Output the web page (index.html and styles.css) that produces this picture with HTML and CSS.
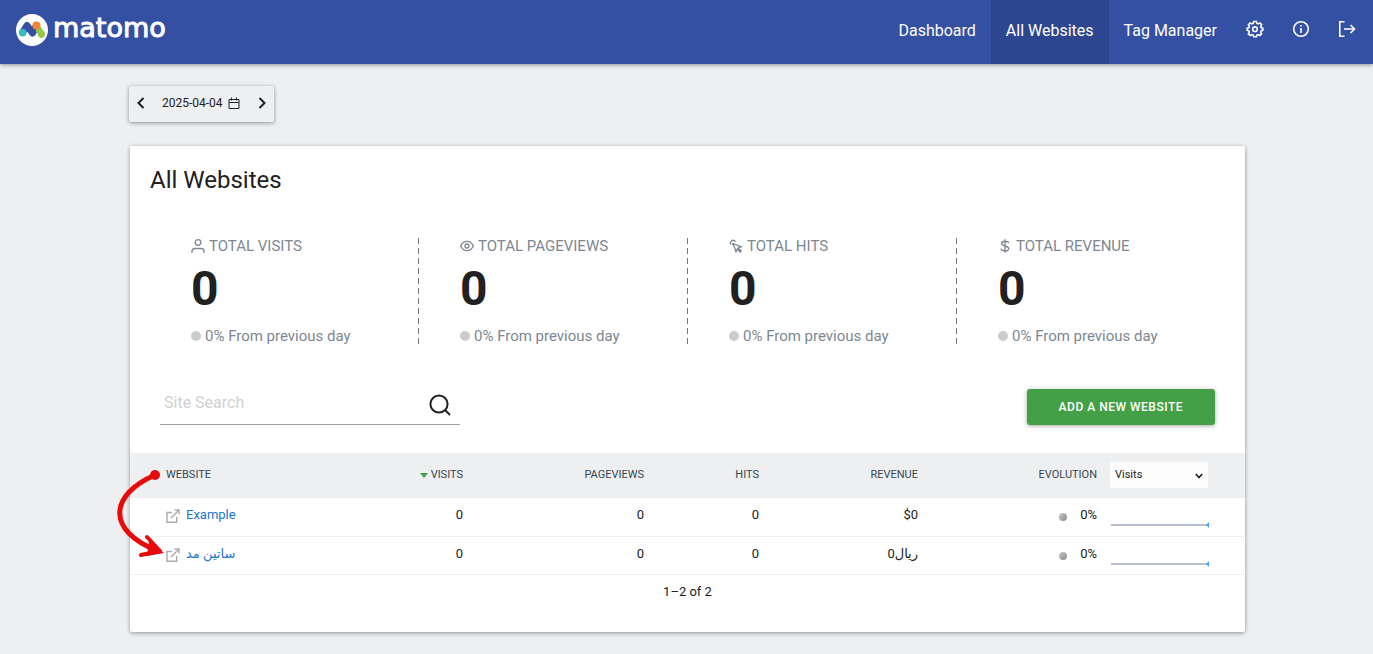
FILE: index.html
```html
<!DOCTYPE html>
<html lang="en">
<head>
<meta charset="utf-8">
<title>All Websites - Matomo</title>
<meta name="viewport" content="width=device-width, initial-scale=1">
<link rel="stylesheet" href="styles.css">
</head>
<body>
<header class="topbar">
  <a class="brand" href="#" aria-label="matomo">
    <svg class="brand-mark" viewBox="0 0 32 32" aria-hidden="true">
      <circle cx="16" cy="16" r="16" fill="#fff"/>
      <path d="M6.600 18.500L11 11.500L16.500 19L20.600 11.500" fill="none" stroke="#3450a3" stroke-width="7" stroke-linecap="round" stroke-linejoin="round"/>
      <path d="M23.700 11.500L28 17.500A3.700 3.700 0 1 1 21.800 20.500L19.500 16.500Z" fill="#95c748"/>
      <circle cx="20.400" cy="11.500" r="4" fill="#f38334"/>
      <circle cx="6.700" cy="18.700" r="3.700" fill="#35bfc0"/>
    </svg>
    <span class="brand-name">matomo</span>
  </a>
  <nav class="nav">
    <a class="nav-link" href="#">Dashboard</a>
    <a class="nav-link nav-link-active" href="#">All Websites</a>
    <a class="nav-link" href="#">Tag Manager</a>
    <a class="nav-icon" href="#" aria-label="Administration">
      <svg class="icon-nav" viewBox="0 0 18 18" aria-hidden="true"><path d="M7.600 1.500h2.800l.5 1.900 1.300.5 1.700-1 1.800 1.800-1 1.700.5 1.300 1.600.4v2.200l-1.700.5-.5 1.300 1 1.700-1.800 1.800-1.700-1-1.200.5-.5 1.700H7.700l-.5-1.700-1.300-.5-1.700 1-1.800-1.800 1-1.700-.5-1.300-1.700-.5V8.100l1.700-.4.5-1.300-1-1.700L4.200 2.900l1.700 1 1.300-.5z"/><circle cx="9" cy="9.200" r="2.300"/></svg>
    </a>
    <a class="nav-icon" href="#" aria-label="Help">
      <svg class="icon-nav" viewBox="0 0 18 18" aria-hidden="true"><circle cx="9" cy="9" r="7.300"/><path d="M9 8v5M9 5v1.500"/></svg>
    </a>
    <a class="nav-icon" href="#" aria-label="Sign out">
      <svg class="icon-nav" viewBox="0 0 18 18" aria-hidden="true"><path d="M6.500 1.700h-4.700v14.600h4.700M6 9h10.500M12.500 5l4 4-4 4"/></svg>
    </a>
  </nav>
</header>

<main class="page">
  <div class="period">
    <button class="period-step" type="button" aria-label="Previous day"><svg class="icon-step" viewBox="0 0 8 12" aria-hidden="true"><path d="M6.500 1L1.500 6l5 5"/></svg></button>
    <button class="period-date" type="button">2025-04-04
      <svg class="icon-calendar" viewBox="0 0 12 12" aria-hidden="true"><path d="M1 2.500h10v9H1zM1 5.500h10M3.500.5v3M8.500.5v3"/></svg>
    </button>
    <button class="period-step" type="button" aria-label="Next day"><svg class="icon-step" viewBox="0 0 8 12" aria-hidden="true"><path d="M1.500 1l5 5-5 5"/></svg></button>
  </div>

  <section class="card">
    <h1 class="card-title">All Websites</h1>

    <div class="kpis">
      <div class="kpi">
        <div class="kpi-label"><svg class="icon-kpi" viewBox="0 0 14 14" aria-hidden="true"><circle cx="7" cy="3.500" r="2.800"/><path d="M1 14v-1.500a3 3 0 0 1 3-3h6a3 3 0 0 1 3 3V14"/></svg>TOTAL VISITS</div>
        <div class="kpi-value">0</div>
        <div class="kpi-change"><span class="dot"></span>0% From previous day</div>
      </div>
      <div class="kpi">
        <div class="kpi-label"><svg class="icon-kpi" viewBox="0 0 14 14" aria-hidden="true"><path d="M.6 7C3.500.800 10.500.800 13.400 7 10.500 13.200 3.500 13.200.6 7z"/><circle cx="7" cy="7" r="2"/></svg>TOTAL PAGEVIEWS</div>
        <div class="kpi-value">0</div>
        <div class="kpi-change"><span class="dot"></span>0% From previous day</div>
      </div>
      <div class="kpi">
        <div class="kpi-label"><svg class="icon-kpi" viewBox="0 0 14 14" aria-hidden="true"><path d="M4 4.500l8.300 3.300-3 1.200 3 3-1.200 1-2.800-3-1.300 2.800zM1.800 5.500A2.600 2.600 0 1 1 6.500 2.700M3.300 4.500L4 6"/></svg>TOTAL HITS</div>
        <div class="kpi-value">0</div>
        <div class="kpi-change"><span class="dot"></span>0% From previous day</div>
      </div>
      <div class="kpi">
        <div class="kpi-label"><svg class="icon-kpi" viewBox="0 0 14 14" aria-hidden="true"><path d="M7 .3v13.400M10.700 4.200C10.200 1.600 3.500 1.500 3.500 4.500S10.800 6.500 10.800 9.600 3.500 12.600 3 9.600"/></svg>TOTAL REVENUE</div>
        <div class="kpi-value">0</div>
        <div class="kpi-change"><span class="dot"></span>0% From previous day</div>
      </div>
    </div>

    <div class="toolbar">
      <form class="search">
        <input class="search-input" type="text" placeholder="Site Search" aria-label="Site Search">
        <button class="search-button" type="button" aria-label="Search"><svg class="icon-search" viewBox="0 0 22 22" aria-hidden="true"><circle cx="10" cy="10" r="8.600"/><path d="M16 16l5 5"/></svg></button>
      </form>
      <button class="add-button" type="button">ADD A NEW WEBSITE</button>
    </div>

    <div class="table-wrap">
      <table class="sites">
        <colgroup>
          <col class="col-site"><col class="col-visits"><col class="col-pageviews"><col class="col-hits"><col class="col-revenue"><col class="col-evolution"><col class="col-graph">
        </colgroup>
        <thead>
          <tr>
            <th class="site-cell" scope="col">WEBSITE</th>
            <th scope="col"><span class="sort-arrow"></span>VISITS</th>
            <th scope="col">PAGEVIEWS</th>
            <th scope="col">HITS</th>
            <th scope="col">REVENUE</th>
            <th scope="col">EVOLUTION</th>
            <th class="graph-cell" scope="col">
              <div class="metric">
                <select class="metric-select" aria-label="Evolution metric"><option>Visits</option><option>Pageviews</option><option>Revenue</option></select>
                <svg class="icon-chevron" viewBox="0 0 8 6" aria-hidden="true"><path d="M.8 1L4 4.500 7.200 1"/></svg>
              </div>
            </th>
          </tr>
        </thead>
        <tbody>
          <tr>
            <td class="site-cell"><div class="site"><a class="site-out" href="#" aria-label="Open Example"><svg class="icon-out" viewBox="0 0 14 14" aria-hidden="true"><path d="M6 3.500H1v9.700h9.700V8M8.500 1H13v4.500M13 1L5 9"/></svg></a><a class="site-link" href="#">Example</a></div></td>
            <td>0</td><td>0</td><td>0</td><td>$0</td>
            <td><span class="trend"></span>0%</td>
            <td class="graph-cell"><svg class="spark" viewBox="0 0 98 6" aria-hidden="true"><path d="M0 3h96" stroke="#b5bfd0" stroke-width="2"/><path d="M98 0v6l-3-3z" fill="#4aa8f5"/></svg></td>
          </tr>
          <tr>
            <td class="site-cell"><div class="site"><a class="site-out" href="#" aria-label="Open ساتین مد"><svg class="icon-out" viewBox="0 0 14 14" aria-hidden="true"><path d="M6 3.500H1v9.700h9.700V8M8.500 1H13v4.500M13 1L5 9"/></svg></a><a class="site-link" href="#">ساتین مد</a></div></td>
            <td>0</td><td>0</td><td>0</td><td>ریال0</td>
            <td><span class="trend"></span>0%</td>
            <td class="graph-cell"><svg class="spark" viewBox="0 0 98 6" aria-hidden="true"><path d="M0 3h96" stroke="#b5bfd0" stroke-width="2"/><path d="M98 0v6l-3-3z" fill="#4aa8f5"/></svg></td>
          </tr>
        </tbody>
      </table>
      <svg class="callout" viewBox="0 0 50 94" aria-hidden="true">
        <circle cx="41" cy="8" r="5" fill="#e80b0b"/>
        <path d="M41 8C-5 28-8 64 44 84" fill="none" stroke="#e80b0b" stroke-width="5"/>
        <path d="M33 70L46 84L27 88" fill="none" stroke="#e80b0b" stroke-width="4" stroke-linecap="round" stroke-linejoin="round"/>
        <path d="M35 74L50 86L33 89Z" fill="#e80b0b"/>
      </svg>
    </div>
    <div class="pager">1–2 of 2</div>
  </section>
</main>
</body>
</html>
```
FILE: styles.css
```css
* { box-sizing: border-box; }

body {
  margin: 0;
  background: #eeeff1;
  color: #212121;
  font-family: Roboto, "DejaVu Sans", sans-serif;
  font-size: 13px;
}

a { text-decoration: none; }
button, input, select { font-family: inherit; color: inherit; }
button { border: 0; background: none; padding: 0; cursor: pointer; }
svg { display: block; flex: none; }

.topbar {
  display: flex;
  justify-content: space-between;
  height: 64px;
  padding: 0 3px 0 16px;
  background: #3450a3;
  box-shadow: 0 1px 4px rgba(0, 0, 0, .4);
}
.brand { display: flex; align-items: center; gap: 5px; height: 60px; color: #fff; }
.brand-mark { width: 32px; height: 32px; }
.brand-name {
  padding-bottom: 4px;
  font-family: "DejaVu Sans", sans-serif;
  font-size: 27px;
  line-height: 32px;
  -webkit-text-stroke: 1px #fff;
}
.nav { display: flex; }
.nav-link { padding: 0 15px; color: #fff; font-size: 16px; line-height: 61px; }
.nav-link-active { background: #2d4690; }
.nav-icon { display: flex; align-items: center; padding: 0 14px; height: 58px; }
.icon-nav { width: 18px; height: 18px; fill: none; stroke: #fff; stroke-width: 1.6; }

.page { padding: 22px 128px 22px 129px; }

.period {
  display: inline-flex;
  align-items: center;
  height: 36px;
  padding-bottom: 2px;
  border-radius: 2px;
  background: #eeeff1;
  box-shadow: 0 1px 4px rgba(0, 0, 0, .4);
  vertical-align: top;
}
.period-step { display: flex; align-items: center; justify-content: center; width: 24px; height: 32px; }
.icon-step { width: 8px; height: 12px; fill: none; stroke: #212121; stroke-width: 2; }
.period-date { display: flex; align-items: center; gap: 5px; padding: 0 10px 0 9px; font-size: 12px; }
.icon-calendar { width: 12px; height: 12px; fill: none; stroke: #212121; stroke-width: 1; }

.card {
  margin: 24px 0 0 1px;
  padding-bottom: 31px;
  background: #fff;
  border-radius: 2px;
  box-shadow: 0 1px 4px rgba(0, 0, 0, .4);
}
.card-title { margin: 0; padding: 18px 20px 0; font-size: 24px; font-weight: 400; line-height: 32px; }

.kpis { display: grid; grid-template-columns: repeat(4, 1fr); padding: 42px 19px 0 20px; }
.kpi { position: relative; height: 108px; padding-left: 41px; color: #7c8793; font-size: 15px; }
.kpi + .kpi::before {
  content: "";
  position: absolute;
  top: 0;
  bottom: 0;
  left: -1px;
  width: 1px;
  background: repeating-linear-gradient(#777 0 6px, transparent 6px 10px);
}
.kpi-label { display: flex; align-items: center; gap: 4px; line-height: 16px; }
.icon-kpi { width: 14px; height: 14px; fill: none; stroke: #7c8793; stroke-width: 1.3; }
.kpi-value { color: #212121; font-size: 48px; font-weight: 700; line-height: 70px; }
.kpi-change { display: flex; align-items: center; gap: 4px; line-height: 24px; }
.dot { width: 10px; height: 10px; border-radius: 50%; background: #ccc; }

.toolbar { display: flex; align-items: flex-end; justify-content: space-between; padding: 35px 30px 28px; }
.search { display: flex; width: 300px; height: 44px; border-bottom: 1px solid #9e9e9e; }
.search-input { flex: 1; min-width: 0; padding: 0 4px; border: 0; outline: 0; background: none; font-size: 16px; }
.search-input::placeholder { color: #d1d1d1; opacity: 1; }
.search-button { padding: 4px 9px 0 10px; }
.icon-search { width: 22px; height: 22px; fill: none; stroke: #212121; stroke-width: 2; }
.add-button {
  height: 36px;
  padding: 0 32px;
  border-radius: 3px;
  background: #43a047;
  color: #fff;
  font-size: 12px;
  font-weight: 500;
  letter-spacing: .5px;
  box-shadow: 0 1px 4px rgba(0, 0, 0, .35);
}

.table-wrap { position: relative; }
.sites { width: 100%; border-collapse: collapse; table-layout: fixed; }
.col-site { width: 243px; }
.col-visits { width: 100px; }
.col-pageviews { width: 181px; }
.col-hits { width: 115px; }
.col-revenue { width: 159px; }
.col-evolution { width: 179px; }
.col-graph { width: 138px; }
.sites th { height: 45px; padding: 0 10px 2px 0; background: #eeeff1; color: #37474f; font-size: 11px; font-weight: 400; text-align: right; }
.sites td { height: 38px; padding: 0 10px 4px 0; border-bottom: 1px solid #f0f0f0; text-align: right; }
.sites .site-cell { padding-left: 36px; text-align: left; }
.sites .graph-cell { padding-left: 3px; text-align: left; }
.site { display: flex; align-items: center; gap: 6px; }
.site-out { padding-top: 3px; }
.icon-out { width: 14px; height: 14px; fill: none; stroke: #aaa; stroke-width: 1.4; }
.site-link { color: #1976d2; }
.sort-arrow {
  display: inline-block;
  margin-right: 3px;
  border: 4px solid transparent;
  border-top: 5px solid #43a047;
  border-bottom: 0;
}
.metric { position: relative; width: 98px; }
.metric-select { width: 100%; height: 26px; padding: 0 5px; border: 0; border-radius: 0; appearance: none; background: #fdfdfd; color: #212121; font-size: 11px; }
.icon-chevron { position: absolute; top: 11px; right: 5px; width: 8px; height: 6px; fill: none; stroke: #212121; stroke-width: 1.6; pointer-events: none; }
.trend {
  display: inline-block;
  width: 8px;
  height: 8px;
  margin-right: 13px;
  border-radius: 50%;
  background: linear-gradient(135deg, #ccc, #888);
  vertical-align: -2px;
}
.spark { width: 98px; height: 6px; margin: 21px 0 0 1px; }
.callout { position: absolute; top: 14px; left: -16px; width: 50px; height: 94px; pointer-events: none; }

.pager { padding-top: 8px; line-height: 18px; text-align: center; }
```
